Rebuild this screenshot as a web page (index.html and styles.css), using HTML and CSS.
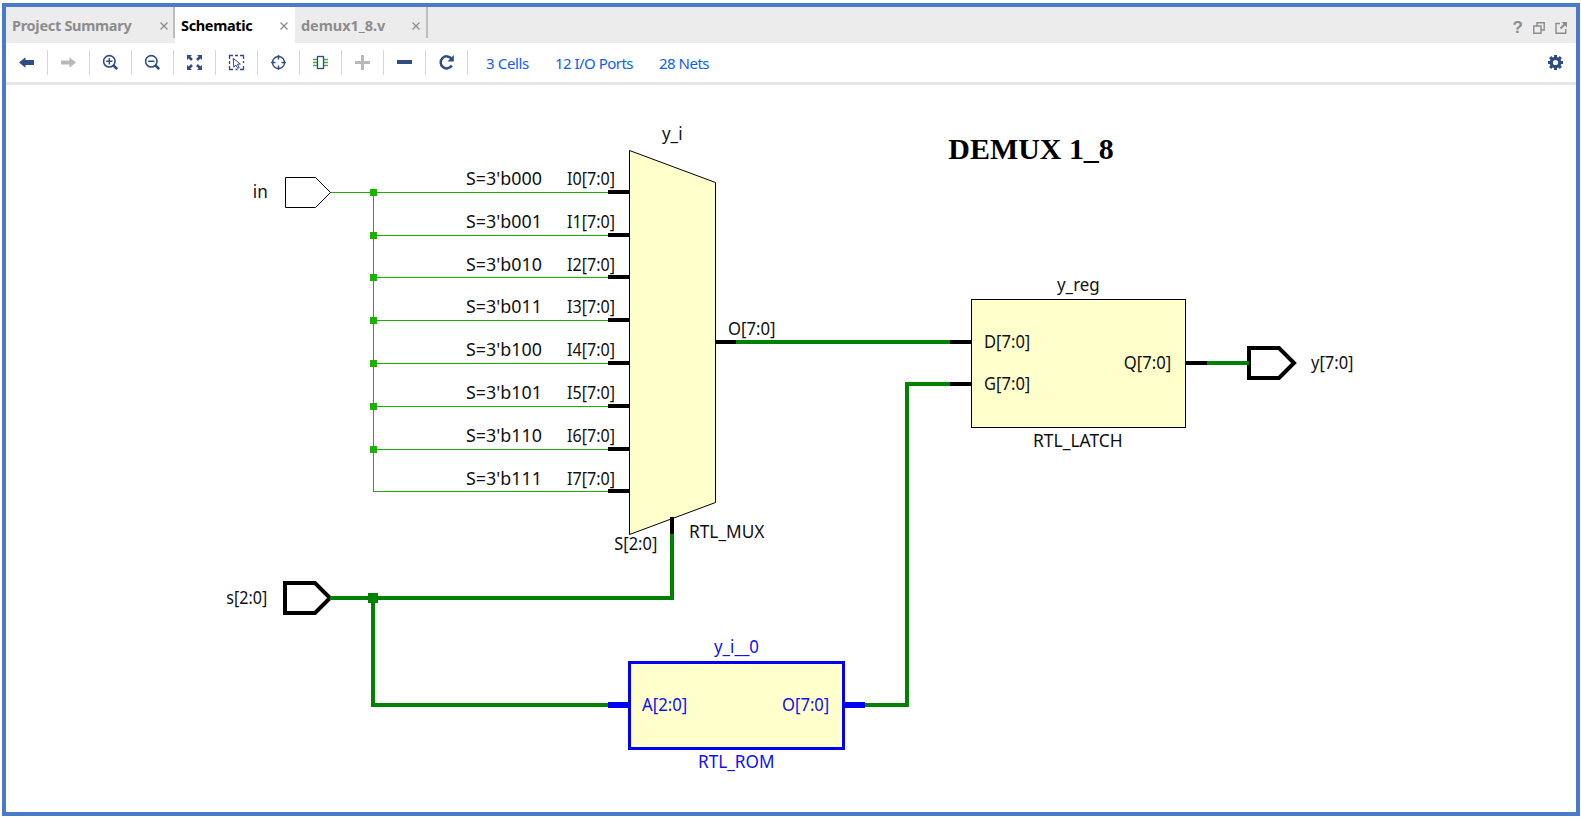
FILE: index.html
```
<!DOCTYPE html>
<html lang="en">
<head>
<meta charset="utf-8">
<title>Schematic</title>
<link rel="stylesheet" href="styles.css">
</head>
<body>
<div class="window">
  <header class="tabs">
    <div class="tab tab-summary"><span class="label">Project Summary</span><svg class="close" viewBox="0 0 8 8"><path d="M.5 .5l7 7M7.5 .5l-7 7"/></svg></div>
    <div class="tab tab-schematic active"><span class="label">Schematic</span><svg class="close" viewBox="0 0 8 8"><path d="M.5 .5l7 7M7.5 .5l-7 7"/></svg></div>
    <div class="tab tab-file"><span class="label">demux1_8.v</span><svg class="close" viewBox="0 0 8 8"><path d="M.5 .5l7 7M7.5 .5l-7 7"/></svg></div>
    <div class="window-tools">
      <span class="help">?</span>
      <svg width="12" height="12" viewBox="0 0 12 12"><path d="M4 3.5V.8h7.2V8H8.5M.8 4h7.2v7.2H.8z"/></svg>
      <svg width="12" height="12" viewBox="0 0 12 12"><path d="M5 1.5H1v9.7h9.7V7"/><path d="M5.5 6.5L9.5 2.5" stroke-width="2"/><path class="solid" d="M6.5 0H12v5.5z"/></svg>
    </div>
  </header>
  <nav class="toolbar">
    <div class="tool"><svg viewBox="0.5 0.5 15 15"><path class="fill" d="M.5 8L7 2.7V5.500H15.500V10.500H7V13.300z"/></svg></div>
    <div class="tool off"><svg viewBox="0.5 0.5 15 15"><path class="fill" d="M15.500 8L9 2.700V6H.5V10H9V13.300z"/></svg></div>
    <div class="tool"><svg viewBox="0.5 0.5 15 15"><circle cx="6.800" cy="6.800" r="5.700" stroke-width="1.600"/><path d="M3.600 6.800h6.400M6.800 3.600v6.400" stroke-width="1.400"/><path d="M11 11l3.700 3.700" stroke-width="2.600"/></svg></div>
    <div class="tool"><svg viewBox="0.5 0.5 15 15"><circle cx="6.800" cy="6.800" r="5.700" stroke-width="1.600"/><path d="M3.600 6.800h6.400" stroke-width="1.600"/><path d="M11 11l3.700 3.700" stroke-width="2.600"/></svg></div>
    <div class="tool"><svg viewBox="0.5 0.5 15 15"><path class="fill" d="M.5.500h5L3.900 2.100 6.400 4.600 4.600 6.400 2.100 3.900.5 5.500zM15.500.500v5L13.900 3.900 11.400 6.400 9.600 4.600 12.100 2.100 10.500.500zM.5 15.500v-5L2.100 12.100 4.600 9.600 6.400 11.400 3.900 13.900 5.500 15.500zM15.500 15.500h-5L12.100 13.900 9.600 11.400 11.400 9.600 13.900 12.100 15.500 10.500z"/></svg></div>
    <div class="tool"><svg viewBox="0.5 0.5 15 15"><path d="M1 4.500V1h3.500M6.500 1h3M11.500 1H15v3.500M1 6.500v3M1 11.500V15h3.500M15 11.500V15h-3.500M15 6.500v2M7 15h2" stroke-width="1.300"/><path d="M4.700 3.800L11.800 9.500 8.900 9.800 10.700 13.200 9.300 13.900 7.500 10.600 5.300 12.600z" stroke-width="1"/></svg></div>
    <div class="tool"><svg viewBox="0.5 0.5 15 15"><circle cx="8" cy="8" r="6" stroke-width="1.400"/><path d="M8 .5v4.500M8 11v4.500M.5 8h4.500M11 8h4.500" stroke-width="1.400"/></svg></div>
    <div class="tool"><svg viewBox="0.5 0.5 15 15"><path class="pins" d="M.5 5h4M.5 8h4M.5 11h4M11.500 5h4M11.500 8h4M11.500 11h4"/><rect x="5" y="2" width="6" height="12" stroke-width="1.300"/></svg></div>
    <div class="tool off"><svg viewBox="0.5 0.5 15 15"><path d="M.5 8h15M8 .5v15" stroke-width="3"/></svg></div>
    <div class="tool"><svg viewBox="0.5 0.5 15 15"><path d="M.5 7.500h15" stroke-width="4"/></svg></div>
    <div class="tool"><svg viewBox="0.5 0.5 15 15"><path d="M13 4.300A6 6 0 1 0 13.300 11" stroke-width="2.500"/><path class="fill" d="M15.300 .6V7H9z"/></svg></div>
    <div class="counts">
      <a class="cells">3 Cells</a><a class="ports">12 I/O Ports</a><a class="nets">28 Nets</a>
    </div>
    <svg class="gear" viewBox="0.5 0.5 15 15"><circle cx="8" cy="8" r="4.200" stroke-width="3.200"/><path d="M8 .5v3M8 12.500v3M.5 8h3M12.500 8h3M2.600 2.600l2 2M11.400 11.400l2 2M2.600 13.400l2-2M11.400 4.600l2-2" stroke-width="3"/></svg>
  </nav>
  <main class="canvas">
    <svg class="schematic" viewBox="6 85 1570 727">
      <!-- single-bit input net -->
      <g class="net">
        <path d="M330 192.500H610M373.500 192V491.500M373 235.500H610M373 277.500H610M373 320.500H610M373 363.500H610M373 406.500H610M373 449.500H610M373 491.500H610"/>
        <path class="junction" d="M370 189h7v7h-7zM370 232h7v7h-7zM370 274h7v7h-7zM370 317h7v7h-7zM370 360h7v7h-7zM370 403h7v7h-7zM370 446h7v7h-7z"/>
      </g>
      <path class="port thin" d="M285.500 177.500H315.500L330.500 192.500L315.500 207.500H285.500z"/>
      <path class="port thick" d="M285 583H315L330 598L315 613H285z"/>
      <path class="port thick" d="M1249 348H1279L1294 363L1279 378H1249z"/>

      <!-- multiplexer -->
      <path class="cell" d="M629.500 150.500L715.500 182.500V502.500L629.500 534.500z"/>
      <path class="pin" d="M608 192h21M608 235h21M608 277h21M608 320h21M608 363h21M608 406h21M608 449h21M608 491h21M716 342h20M672 517v17"/>
      <!-- latch -->
      <rect class="cell" x="971.500" y="299.500" width="214" height="128"/>
      <path class="pin" d="M950 342h21M950 384h21M1186 363h21"/>

      <!-- buses -->
      <path class="bus" d="M736 342H950M1207 363H1249M330 598H672V534M373 598V705H608M865 705H907V384H950"/>
      <rect class="bus-junction" x="368" y="593" width="10" height="10"/>

      <!-- selected ROM -->
      <rect class="cell selected" x="629.500" y="662.500" width="214" height="86"/>
      <path class="pin selected" d="M608 705h21M845 705h20"/>

      <g class="text">
        <text x="252.800" y="198.300" textLength="15">in</text>
        <text x="226.200" y="604" textLength="41">s[2:0]</text>
        <text x="662" y="140.300" textLength="20.500">y_i</text>
        <text x="466" y="185.300" textLength="76">S=3'b000</text><text x="567" y="185.300" textLength="48">I0[7:0]</text>
        <text x="466" y="228.300" textLength="76">S=3'b001</text><text x="567" y="228.300" textLength="48">I1[7:0]</text>
        <text x="466" y="271.300" textLength="76">S=3'b010</text><text x="567" y="271.300" textLength="48">I2[7:0]</text>
        <text x="466" y="313.300" textLength="76">S=3'b011</text><text x="567" y="313.300" textLength="48">I3[7:0]</text>
        <text x="466" y="356.300" textLength="76">S=3'b100</text><text x="567" y="356.300" textLength="48">I4[7:0]</text>
        <text x="466" y="399.300" textLength="76">S=3'b101</text><text x="567" y="399.300" textLength="48">I5[7:0]</text>
        <text x="466" y="442.300" textLength="76">S=3'b110</text><text x="567" y="442.300" textLength="48">I6[7:0]</text>
        <text x="466" y="485.300" textLength="76">S=3'b111</text><text x="567" y="485.300" textLength="48">I7[7:0]</text>
        <text x="728" y="335.300" textLength="47.500">O[7:0]</text>
        <text x="689" y="538" textLength="75.500">RTL_MUX</text>
        <text x="614.300" y="550" textLength="43">S[2:0]</text>
        <text x="1057" y="291" textLength="42.700">y_reg</text>
        <text x="984" y="348" textLength="46.300">D[7:0]</text>
        <text x="984" y="390" textLength="46.300">G[7:0]</text>
        <text x="1123.700" y="369" textLength="47.500">Q[7:0]</text>
        <text x="1033" y="447" textLength="89.700">RTL_LATCH</text>
        <text x="1311" y="369" textLength="42.500">y[7:0]</text>
      </g>
      <g class="text selected-text">
        <text x="714" y="653" textLength="45">y_i__0</text>
        <text x="642" y="711" textLength="45.300">A[2:0]</text>
        <text x="782" y="711" textLength="47.300">O[7:0]</text>
        <text x="698" y="768" textLength="76.500">RTL_ROM</text>
      </g>
      <text class="title" x="948.300" y="159" textLength="165.500">DEMUX 1_8</text>
    </svg>
  </main>
</div>
<script src="labels.js"></script>
</body>
</html>
```
FILE: labels.js
```
document.querySelectorAll('.schematic text').forEach(function (t) {
  t.setAttribute('lengthAdjust', 'spacingAndGlyphs');
});
```
FILE: styles.css
```
* { box-sizing: border-box; }
body {
  margin: 0;
  padding: 3px 1px 2px 2px;
  height: 818px;
  overflow: hidden;
  background: #fff;
  font-family: "Noto Sans", "Open Sans", sans-serif;
}
.window {
  display: flex;
  flex-direction: column;
  height: 813px;
  border: 4px solid #4a7bcb;
}
.tabs { display: flex; height: 36px; background: #ececec; }
.tab {
  display: flex;
  align-items: center;
  justify-content: space-between;
  height: 36px;
  color: #8c8c8c;
  font-size: 14.5px;
  font-weight: 700;
  white-space: nowrap;
}
.tab .label { line-height: 36px; }
.tab-summary {
  width: 169px;
  padding: 0 7px 0 6px;
  background: linear-gradient(#bdbdbd, #bdbdbd) right top / 2px 31px no-repeat;
}
.tab-schematic { width: 120px; padding: 0 7px 0 6px; }
.tab-file {
  width: 133px;
  padding: 0 8px 0 6px;
  background: linear-gradient(#bdbdbd, #bdbdbd) right top / 2px 31px no-repeat;
}
.tab.active { background: #fff; color: #000; }
.tab-summary .label { letter-spacing: -0.3px; }
.tab-schematic .label { letter-spacing: -0.35px; }
.tab-file .label { letter-spacing: -0.05px; }
.close { width: 8px; height: 8px; stroke: #8c8c8c; stroke-width: 1.3; fill: none; margin-top: 2px; }
.window-tools { display: flex; align-items: center; gap: 10px; margin-left: auto; padding: 5px 9px 0 0; }
.window-tools svg { stroke: #8c8c8c; stroke-width: 1.4; fill: none; }
.window-tools .solid { fill: #8c8c8c; stroke: none; }
.help { color: #8c8c8c; font: 700 17px/17px "Liberation Sans", sans-serif; }
.toolbar {
  display: flex;
  align-items: center;
  height: 42px;
  flex: none;
  border-bottom: 3px solid #e6e6e6;
}
.tool {
  display: flex;
  align-items: center;
  justify-content: center;
  width: 42px;
  height: 25px;
  border-right: 1px solid #d6d6d6;
}
.tool svg, .gear { width: 15px; height: 15px; fill: none; stroke: #2f4c85; overflow: visible; }
.tool .fill { fill: #2f4c85; stroke: none; }
.tool.off svg { stroke: #b8b8b8; }
.tool.off .fill { fill: #b8b8b8; }
.tool .pins { stroke: #3fae49; stroke-width: 1.6; }
.counts {
  display: flex;
  padding-left: 18px;
  color: #0f5bff;
  font-size: 15px;
  line-height: 20px;
  white-space: nowrap;
}
.counts .cells { width: 69px; letter-spacing: -0.35px; }
.counts .ports { width: 104px; letter-spacing: -0.53px; }
.counts .nets { letter-spacing: -0.5px; }
.gear { margin-left: auto; margin-right: 13px; }
.canvas { display: flex; flex: 1; }
.schematic { display: block; width: 1570px; height: 727px; }
.net path { stroke: #1bb100; fill: none; shape-rendering: crispEdges; }
.net .junction { fill: #1bb100; stroke: none; }
.port { fill: #fff; stroke: #000; }
.thick { stroke-width: 4; }
.cell { fill: #ffffcc; stroke: #000; }
.pin { stroke: #000; stroke-width: 4; fill: none; shape-rendering: crispEdges; }
.bus { stroke: #008200; stroke-width: 4; fill: none; shape-rendering: crispEdges; }
.bus-junction { fill: #008200; }
.cell.selected { stroke: #0000f5; stroke-width: 3; }
.pin.selected { stroke: #0000f5; stroke-width: 6; }
.text { font-size: 17.3px; fill: #111; }
.selected-text { fill: #1010f0; }
.title { font: 700 30px "Liberation Serif", serif; fill: #000; }
```
